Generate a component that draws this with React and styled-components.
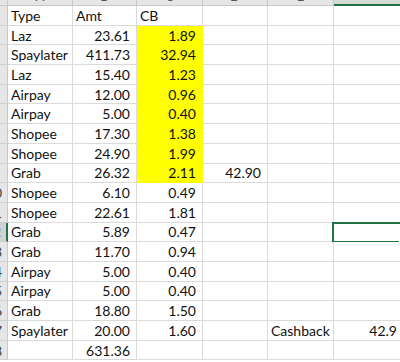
import React from 'react';
import styled, {createGlobalStyle} from "styled-components";

const GlobalStyle = createGlobalStyle`
    body {
        margin: 0;
        background: #ffffff;
        overflow: hidden;
    }
`

const green = "#217346";
const grid_line = "#dadada";

const Sheet = styled.div`
    display: grid;
    grid-template-columns: 8px 65px 64px 66px 65px 66px 70px;
    grid-template-rows: 6px;
    grid-auto-rows: 19.7px;
    width: 400px;
    height: 362px;
    overflow: hidden;
    font-family: Lato, "Liberation Sans", sans-serif;
    font-size: 14px;
    color: #111;
`

const Corner = styled.div`
    background: #e6e6e6;
    border-right: 1px solid #c8c8c8;
    border-bottom: 1px solid #c8c8c8;
`

const ColHeader = styled.div`
    display: flex;
    align-items: flex-end;
    justify-content: center;
    overflow: hidden;
    background: ${p => p.$selected ? "#d3dcd6" : "#e6e6e6"};
    border-right: 1px solid #c8c8c8;
    border-bottom: ${p => p.$selected ? `2px solid ${green}` : "1px solid #c8c8c8"};
    color: ${p => p.$selected ? green : "#555"};
    font-size: 13px;

    span {
        display: block;
        height: 20px;
        line-height: 20px;
        flex-shrink: 0;
        margin-bottom: -1px;
    }
`

const RowHeader = styled.div`
    display: flex;
    justify-content: flex-end;
    align-items: center;
    overflow: hidden;
    background: ${p => p.$selected ? "#d2d2d2" : "#e6e6e6"};
    border-right: ${p => p.$selected ? `2px solid ${green}` : "1px solid #c8c8c8"};
    border-bottom: 1px solid #d0d0d0;
    color: ${p => p.$selected ? green : "#444"};

    span {
        flex-shrink: 0;
        width: 26px;
        text-align: center;
    }
`

const Cell = styled.div`
    position: relative;
    display: flex;
    align-items: center;
    justify-content: ${p => p.$right ? "flex-end" : "flex-start"};
    padding: ${p => p.$right ? "0 6px 0 0" : "0 0 0 3px"};
    white-space: nowrap;
    background: ${p => p.$hl ? "#ffff00" : "#ffffff"};
    border-right: 1px solid ${p => p.$hl ? "#ffff00" : grid_line};
    border-bottom: 1px solid ${p => p.$hl ? "#ffff00" : grid_line};
`

const Selection = styled.div`
    position: absolute;
    left: -2px;
    top: -1px;
    right: -1px;
    bottom: -2px;
    border: 2px solid ${green};
`

const FillHandle = styled.div`
    position: absolute;
    right: -4px;
    bottom: -4px;
    width: 5px;
    height: 5px;
    background: ${green};
    border: 1px solid #ffffff;
`

const columns = ["A", "B", "C", "D", "E", "F"];

const rows = [
    {cells: ["Type", "Amt", "CB"], head: true},
    {cells: ["Laz", "23.61", "1.89"], hl: true},
    {cells: ["Spaylater", "411.73", "32.94"], hl: true},
    {cells: ["Laz", "15.40", "1.23"], hl: true},
    {cells: ["Airpay", "12.00", "0.96"], hl: true},
    {cells: ["Airpay", "5.00", "0.40"], hl: true},
    {cells: ["Shopee", "17.30", "1.38"], hl: true},
    {cells: ["Shopee", "24.90", "1.99"], hl: true},
    {cells: ["Grab", "26.32", "2.11", "42.90"], hl: true},
    {cells: ["Shopee", "6.10", "0.49"]},
    {cells: ["Shopee", "22.61", "1.81"]},
    {cells: ["Grab", "5.89", "0.47"], selected: 5},
    {cells: ["Grab", "11.70", "0.94"]},
    {cells: ["Airpay", "5.00", "0.40"]},
    {cells: ["Airpay", "5.00", "0.40"]},
    {cells: ["Grab", "18.80", "1.50"]},
    {cells: ["Spaylater", "20.00", "1.60", "", "Cashback", "42.9"]},
    {cells: ["", "631.36", ""]},
];

const isNumber = v => /^[0-9.]+$/.test(v);

let App = () => {
    return (
        <>
            <GlobalStyle/>
            <Sheet>
                <Corner/>
                {columns.map(c =>
                    <ColHeader key={c} $selected={c === "F"}><span>{c}</span></ColHeader>
                )}
                {rows.map((row, r) => (
                    <React.Fragment key={r}>
                        <RowHeader $selected={row.selected !== undefined}><span>{r + 1}</span></RowHeader>
                        {columns.map((c, i) => {
                            let value = row.cells[i] || "";
                            return (
                                <Cell key={c} $right={!row.head && isNumber(value)} $hl={row.hl && i === 2}>
                                    {value}
                                    {row.selected === i && <Selection><FillHandle/></Selection>}
                                </Cell>
                            );
                        })}
                    </React.Fragment>
                ))}
            </Sheet>
        </>
    );
};

export default App;
